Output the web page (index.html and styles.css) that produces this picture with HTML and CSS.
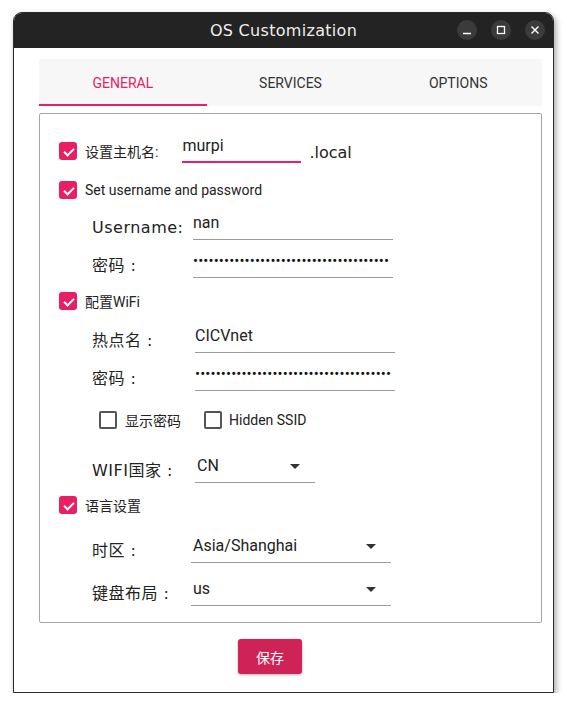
FILE: index.html
```html
<!DOCTYPE html>
<html lang="zh-CN">
<head>
    <meta charset="UTF-8">
    <title>OS Customization</title>
    <link rel="stylesheet" href="styles.css">
</head>
<body>
    <div class="window">
        <div class="titlebar">
            <span class="title">OS Customization</span>
            <div class="win-buttons">
                <span class="win-btn"><svg width="10" height="10" viewBox="0 0 10 10"><path d="M1 8.5h8" stroke="#fff" stroke-width="1.4"/></svg></span>
                <span class="win-btn"><svg width="10" height="10" viewBox="0 0 10 10"><rect x="1.5" y="1.5" width="7" height="7" fill="none" stroke="#fff" stroke-width="1.3"/></svg></span>
                <span class="win-btn"><svg width="10" height="10" viewBox="0 0 10 10"><path d="M1.5 1.5l7 7M8.5 1.5l-7 7" stroke="#fff" stroke-width="1.4"/></svg></span>
            </div>
        </div>

        <div class="window-body">
            <div class="tabs">
                <div class="tab active">GENERAL</div>
                <div class="tab">SERVICES</div>
                <div class="tab">OPTIONS</div>
            </div>

            <div class="panel">
                <div class="check-row host-row">
                    <span class="checkbox checked"></span>
                    <span class="check-label">设置主机名:</span>
                    <span class="host-input">murpi</span>
                    <span class="suffix">.local</span>
                </div>

                <div class="check-row gap-8">
                    <span class="checkbox checked"></span>
                    <span class="check-label">Set username and password</span>
                </div>
                <div class="field">
                    <span class="field-label">Username:</span>
                    <span class="input">nan</span>
                </div>
                <div class="field">
                    <span class="field-label">密码 :</span>
                    <span class="input dots">••••••••••••••••••••••••••••••••••••••</span>
                </div>

                <div class="check-row gap-11">
                    <span class="checkbox checked"></span>
                    <span class="check-label">配置WiFi</span>
                </div>
                <div class="field wifi gap-2">
                    <span class="field-label">热点名 :</span>
                    <span class="input">CICVnet</span>
                </div>
                <div class="field wifi">
                    <span class="field-label">密码 :</span>
                    <span class="input dots">••••••••••••••••••••••••••••••••••••••</span>
                </div>
                <div class="options-row">
                    <span class="checkbox"></span>
                    <span class="check-label">显示密码</span>
                    <span class="checkbox ssid-box"></span>
                    <span class="check-label">Hidden SSID</span>
                </div>
                <div class="field wifi gap-13">
                    <span class="field-label">WIFI国家 :</span>
                    <span class="input select short">CN<i class="arrow"></i></span>
                </div>

                <div class="check-row gap-10">
                    <span class="checkbox checked"></span>
                    <span class="check-label">语言设置</span>
                </div>
                <div class="field locale gap-8">
                    <span class="field-label">时区 :</span>
                    <span class="input select">Asia/Shanghai<i class="arrow"></i></span>
                </div>
                <div class="field locale gap-5">
                    <span class="field-label">键盘布局 :</span>
                    <span class="input select">us<i class="arrow"></i></span>
                </div>
            </div>

            <div class="actions">
                <button class="save-btn">保存</button>
            </div>
        </div>
    </div>
</body>
</html>
```

FILE: styles.css
```css
body { margin: 0; background: #fff; font-family: Roboto, "Noto Sans CJK SC", sans-serif; color: #222; }
.window { margin: 12px 0 0 13px; width: 541px; height: 681px; box-sizing: border-box; border: 1px solid #2a2a2a; border-radius: 9px 9px 0 0; background: #fff; box-shadow: 2px 3px 6px rgba(0,0,0,0.35); overflow: hidden; display: flex; flex-direction: column; }
.titlebar { height: 35px; background: #232323; display: flex; align-items: center; justify-content: center; position: relative; flex-shrink: 0; }
.title { color: #eee; font-family: "DejaVu Sans", sans-serif; font-size: 16px; letter-spacing: 0.3px; }
.win-buttons { position: absolute; right: 8px; top: 7px; display: flex; gap: 14px; }
.win-btn { width: 20px; height: 20px; border-radius: 50%; background: #3b3b3b; display: flex; align-items: center; justify-content: center; }

.window-body { flex-grow: 1; padding: 11px 11px 0 25px; display: flex; flex-direction: column; }
.tabs { display: flex; background: #f7f7f7; height: 47px; }
.tab { flex: 1; display: flex; align-items: center; justify-content: center; font-size: 14px; color: #333; box-sizing: border-box; border-bottom: 2px solid transparent; padding-top: 2px; }
.tab.active { color: #e91e63; border-bottom-color: #e91e63; }

.panel { margin-top: 7px; height: 510px; box-sizing: border-box; border: 1px solid #a6a6a6; border-radius: 2px; padding: 0 0 0 19px; }

.check-row { display: flex; align-items: center; height: 24px; }
.host-row { height: 38px; margin-top: 18px; }
.checkbox { width: 18px; height: 18px; box-sizing: border-box; border: 2px solid #555; border-radius: 2px; flex-shrink: 0; position: relative; }
.checkbox.checked { background: #e91e63; border-color: #e91e63; border-radius: 3px; }
.checkbox.checked::after { content: ""; position: absolute; left: 3px; top: 0px; width: 8px; height: 4px; border-left: 2.5px solid #fff; border-bottom: 2.5px solid #fff; transform: translate(0, 4px) rotate(-45deg); }
.check-label { margin-left: 8px; font-size: 14px; color: #222; }
.host-input { margin-left: 24px; align-self: flex-start; margin-top: 4px; width: 119px; height: 27px; box-sizing: border-box; border-bottom: 2px solid #e91e63; font-size: 16px; line-height: 20px; }
.suffix { margin-left: 8px; font-family: "DejaVu Sans", sans-serif; font-size: 16px; padding-top: 2px; }

.field { display: flex; align-items: flex-end; height: 38px; padding-left: 33px; }
.field-label { width: 101px; flex-shrink: 0; font-family: "DejaVu Sans", "Noto Sans CJK SC", sans-serif; font-size: 16px; line-height: 20px; padding-bottom: 2px; color: #222; letter-spacing: 0.5px; }
.field.wifi .field-label { width: 103px; }
.field.locale .field-label { width: 99px; }
.input { width: 200px; box-sizing: border-box; border-bottom: 1px solid #9a9a9a; font-size: 16px; line-height: 20px; padding-bottom: 6px; white-space: nowrap; overflow: hidden; position: relative; }
.field.locale .input { padding-left: 2px; }
.input.dots { font-size: 15px; letter-spacing: 0.1px; line-height: 20px; padding-bottom: 6px; height: 27px; color: #111; }
.input.short { width: 120px; padding-left: 2px; }
.arrow { position: absolute; right: 15px; top: 8px; width: 0; height: 0; border-left: 5px solid transparent; border-right: 5px solid transparent; border-top: 5px solid #333; }

.options-row { display: flex; align-items: center; height: 24px; margin-top: 17px; padding-left: 40px; }
.ssid-box { margin-left: 23px; }
.ssid-box + .check-label { margin-left: 7px; }

.gap-2 { margin-top: 2px; }
.gap-5 { margin-top: 5px; }
.gap-8 { margin-top: 8px; }
.gap-10 { margin-top: 10px; }
.gap-11 { margin-top: 11px; }
.gap-13 { margin-top: 13px; }

.actions { padding: 16px 0 0 199px; }
.save-btn { width: 64px; height: 35px; border: none; border-radius: 3px; background: #cf2357; color: #fff; font-family: "Noto Sans CJK SC", sans-serif; font-size: 14px; box-shadow: 0 1px 3px rgba(0,0,0,0.3); }
```
